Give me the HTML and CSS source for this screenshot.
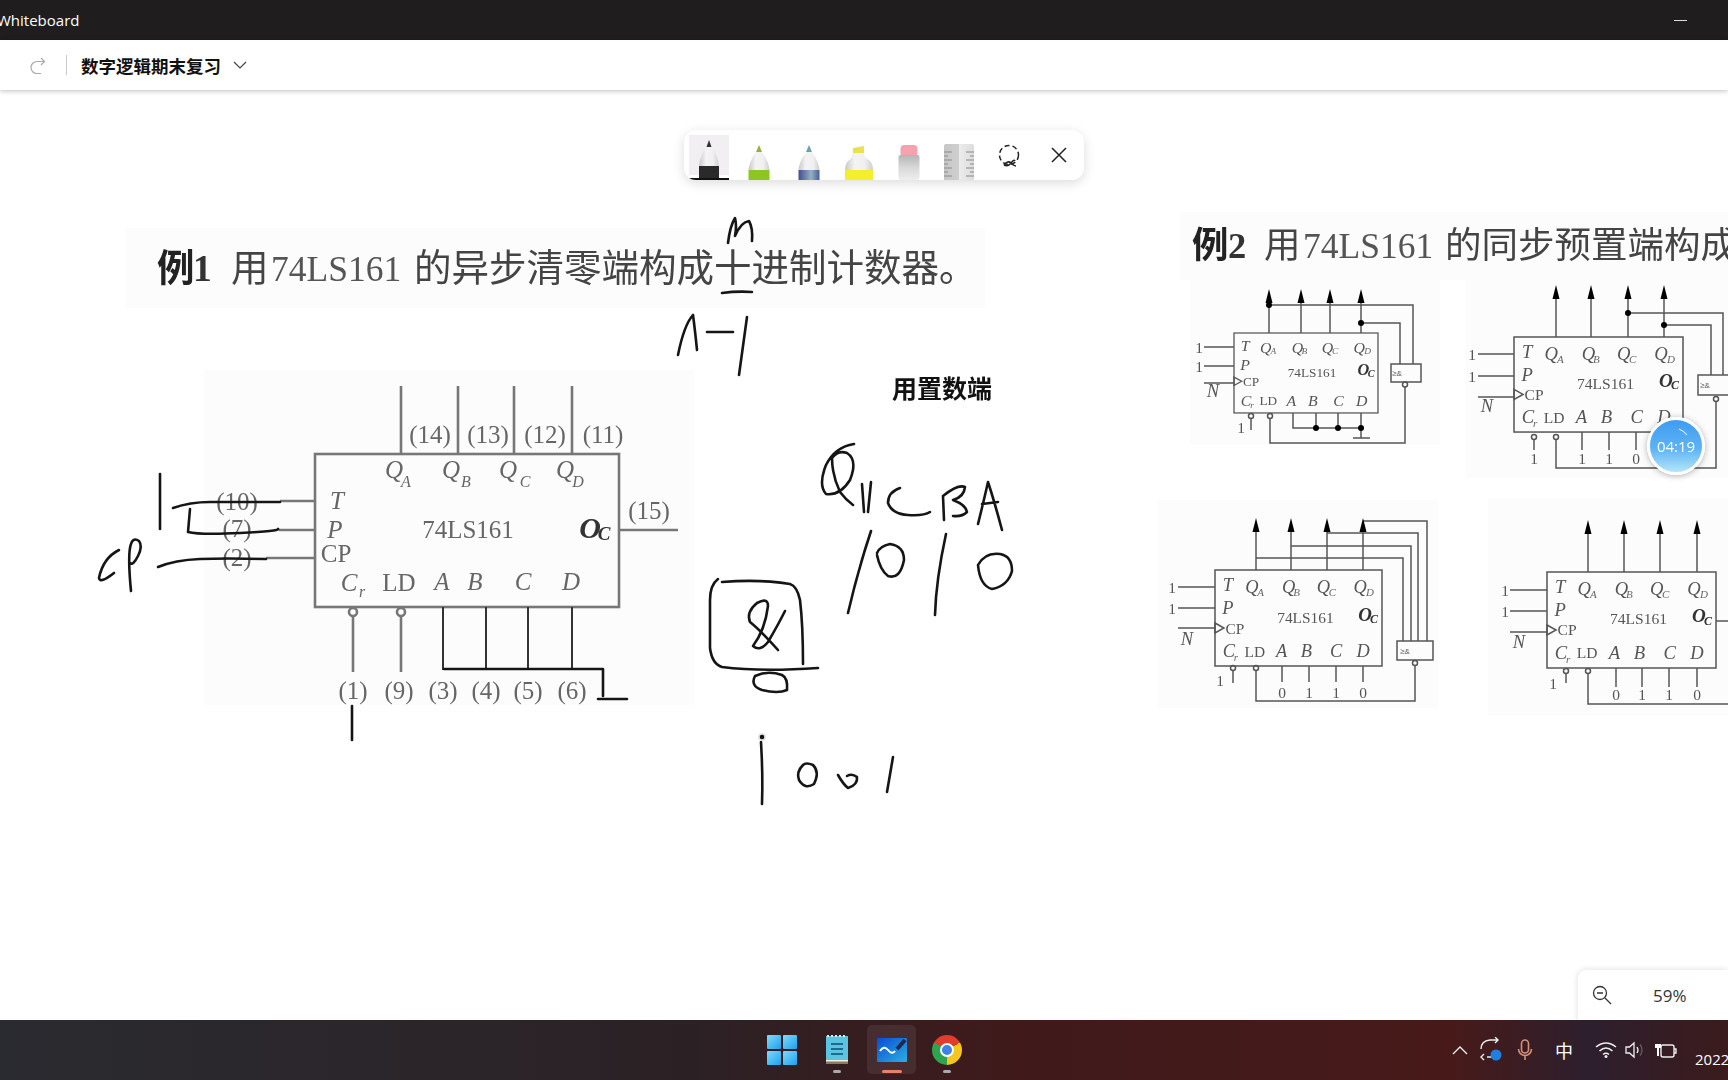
FILE: index.html
```html
<!DOCTYPE html>
<html lang="zh-CN">
<head>
    <meta charset="UTF-8">
    <title>Whiteboard</title>
    <link rel="stylesheet" href="styles.css">
</head>
<body>
    <header class="titlebar">
        <span class="app-name">Whiteboard</span>
        <span class="minimize"></span>
    </header>
    <nav class="toolbar">
        <svg class="redo" width="20" height="20" viewBox="0 0 20 20"><path d="M13 3l3.5 3.5L13 10M16 6.500H9a6 6 0 0 0 0 12h4"/></svg>
        <span class="divider"></span>
        <span class="doc-title">数字逻辑期末复习</span>
        <svg class="chevron" width="14" height="10" viewBox="0 0 14 10"><path d="M1 2l6 6 6-6"/></svg>
    </nav>

    <main class="board">
        <svg class="canvas" width="1728" height="930" viewBox="0 90 1728 930">
            <defs>
                <g id="ic">
                    <rect class="wire" x="0" y="0" width="168" height="96"/>
                    <text class="ic-i" x="13" y="15">T</text>
                    <text class="ic-i" x="37" y="17">Q</text><text class="ic-s" x="46" y="22">A</text>
                    <text class="ic-i" x="74" y="17">Q</text><text class="ic-s" x="82" y="22">B</text>
                    <text class="ic-i" x="109" y="17">Q</text><text class="ic-s" x="118" y="22">C</text>
                    <text class="ic-i" x="146" y="17">Q</text><text class="ic-s" x="156" y="22">D</text>
                    <text class="ic-i" x="13" y="38">P</text>
                    <text class="ic-r" x="91" y="47">74LS161</text>
                    <text class="ic-o" x="151" y="44">O</text><text class="ic-os" x="160" y="49">C</text>
                    <path class="wire" d="M0 53L9 58 0 63Z"/>
                    <text class="ic-r" x="20" y="58">CP</text>
                    <text class="ic-i" x="14" y="81">C</text><text class="ic-s" x="21" y="87">r</text>
                    <text class="ic-r" x="40" y="81">LD</text>
                    <text class="ic-i" x="67" y="81">A</text>
                    <text class="ic-i" x="92" y="81">B</text>
                    <text class="ic-i" x="122" y="81">C</text>
                    <text class="ic-i" x="149" y="81">D</text>
                </g>
                <path id="up" d="M0 0L-3.500 14H3.500Z"/>
                <linearGradient id="pen-shade"><stop offset="0" stop-color="#c9c9c9"/><stop offset=".35" stop-color="#f4f4f4"/><stop offset=".7" stop-color="#f0f0f0"/><stop offset="1" stop-color="#cfcfcf"/></linearGradient>
            </defs>

            <!-- scanned page backgrounds -->
            <rect class="paper" x="125" y="228" width="860" height="80"/>
            <rect class="paper" x="204" y="370" width="490" height="335"/>
            <rect class="paper" x="1180" y="212" width="548" height="68"/>
            <rect class="paper" x="1190" y="280" width="250" height="165"/>
            <rect class="paper" x="1466" y="275" width="262" height="203"/>
            <rect class="paper" x="1157" y="500" width="281" height="208"/>
            <rect class="paper" x="1488" y="498" width="240" height="217"/>

            <g class="scan">
                <text class="head" y="281"><tspan class="head-b" x="157">例</tspan><tspan class="head-nb" x="193">1</tspan><tspan x="231">用</tspan><tspan class="head-n" x="271">74LS161</tspan><tspan x="414">的异步清零端构成十进制计数器。</tspan></text>
                <text class="head head-alt" y="258"><tspan class="head-b" x="1192">例</tspan><tspan class="head-nb" x="1228">2</tspan><tspan x="1264">用</tspan><tspan class="head-n" x="1303">74LS161</tspan><tspan x="1445">的同步预置端构成</tspan></text>

                <!-- main 74LS161 -->
                <rect class="bold-wire" x="315" y="454" width="304" height="153"/>
                <path class="bold-wire" d="M401 386V454M458 386V454M514 386V454M572 386V454M315 501H280M315 530H279M315 558H266M619 530H678M353 616V672M401 616V672"/>
                <path class="thin-ink" d="M443 607V670M486 607V670M528 607V670M572 607V670"/>
                <circle class="bold-wire" cx="353" cy="612" r="4"/>
                <circle class="bold-wire" cx="401" cy="612" r="4"/>
                <text class="m-n" x="430" y="436">(14)</text>
                <text class="m-n" x="488" y="436">(13)</text>
                <text class="m-n" x="545" y="436">(12)</text>
                <text class="m-n" x="603" y="436">(11)</text>
                <text class="m-n" x="649" y="512">(15)</text>
                <text class="m-n" x="237" y="503">(10)</text>
                <text class="m-n" x="237" y="530">(7)</text>
                <text class="m-n" x="237" y="559">(2)</text>
                <text class="m-n" x="353" y="692">(1)</text>
                <text class="m-n" x="399" y="692">(9)</text>
                <text class="m-n" x="443" y="692">(3)</text>
                <text class="m-n" x="486" y="692">(4)</text>
                <text class="m-n" x="528" y="692">(5)</text>
                <text class="m-n" x="572" y="692">(6)</text>
                <text class="m-i" x="394" y="469">Q</text><text class="m-s" x="406" y="481">A</text>
                <text class="m-i" x="451" y="469">Q</text><text class="m-s" x="466" y="481">B</text>
                <text class="m-i" x="508" y="469">Q</text><text class="m-s" x="525" y="481">C</text>
                <text class="m-i" x="565" y="469">Q</text><text class="m-s" x="578" y="481">D</text>
                <text class="m-i" x="337" y="500">T</text>
                <text class="m-i" x="335" y="529">P</text>
                <text class="m-n" x="336" y="555">CP</text>
                <text class="m-n" x="468" y="531">74LS161</text>
                <text class="m-o" x="590" y="527">O</text><text class="m-os" x="604" y="533">C</text>
                <text class="m-i" x="349" y="582">C</text><text class="m-s" x="362" y="591">r</text>
                <text class="m-n" x="399" y="584">LD</text>
                <text class="m-i" x="442" y="581">A</text>
                <text class="m-i" x="475" y="581">B</text>
                <text class="m-i" x="523" y="581">C</text>
                <text class="m-i" x="571" y="581">D</text>

                <!-- 例2 top left -->
                <use href="#ic" transform="translate(1234 333) scale(.857 .833)"/>
                <path class="wire" d="M1269 300V333M1301 300V333M1330 300V333M1361 300V333M1269 305H1413V364M1361 323H1400V364M1204 347H1234M1204 366H1234M1204 383H1234M1405 387V443H1270V419M1251 419V430M1293 413V428H1361M1316 413V428M1338 413V428M1361 413V438M1353 438H1370"/>
                <rect class="wire" x="1391" y="364" width="30" height="18"/>
                <circle class="wire" cx="1405" cy="384.500" r="2.500"/><circle class="wire" cx="1251" cy="416" r="2.500"/><circle class="wire" cx="1270" cy="416" r="2.500"/>
                <circle cx="1269" cy="305" r="3"/><circle cx="1361" cy="323" r="3"/><circle cx="1316" cy="428" r="3"/><circle cx="1338" cy="428" r="3"/><circle cx="1361" cy="428" r="3"/>
                <use href="#up" x="1269" y="289"/><use href="#up" x="1301" y="289"/><use href="#up" x="1330" y="289"/><use href="#up" x="1361" y="289"/>
                <text class="ic-r" x="1199" y="347">1</text><text class="ic-r" x="1199" y="366">1</text><text class="ic-i" x="1213" y="391">N</text><text class="ic-r" x="1241" y="427">1</text>
                <text class="tiny" x="1397" y="373">≥&amp;</text>

                <!-- 例2 top right -->
                <use href="#ic" transform="translate(1514 337) scale(1.006 .99)"/>
                <path class="wire" d="M1556 298V337M1591 298V337M1628 298V337M1664 298V337M1628 313H1723V375M1664 325H1711V375M1478 354H1514M1478 376H1514M1478 397H1514M1716 402V468H1556V440M1534 440V450M1582 432V450M1609 432V450M1636 432V450"/>
                <rect class="wire" x="1698" y="375" width="34" height="20"/>
                <circle class="wire" cx="1716" cy="399" r="2.500"/><circle class="wire" cx="1534" cy="437" r="2.500"/><circle class="wire" cx="1556" cy="437" r="2.500"/>
                <circle cx="1628" cy="313" r="3"/><circle cx="1664" cy="325" r="3"/>
                <use href="#up" x="1556" y="285"/><use href="#up" x="1591" y="285"/><use href="#up" x="1628" y="285"/><use href="#up" x="1664" y="285"/>
                <text class="ic-r" x="1472" y="354">1</text><text class="ic-r" x="1472" y="376">1</text><text class="ic-i" x="1487" y="406">N</text>
                <text class="ic-r" x="1534" y="458">1</text><text class="ic-r" x="1582" y="458">1</text><text class="ic-r" x="1609" y="458">1</text><text class="ic-r" x="1636" y="458">0</text>
                <text class="tiny" x="1705" y="385">≥&amp;</text>

                <!-- 例2 bottom left -->
                <use href="#ic" transform="translate(1215 570) scale(.994 1)"/>
                <path class="wire" d="M1256 530V570M1291 530V570M1327 530V570M1363 530V570M1256 558H1403V641M1291 546H1411V641M1327 533H1418V641M1363 521H1427V641M1178 587H1215M1178 608H1215M1178 628H1215M1415 666V701H1256V671M1233 671V683M1282 666V682M1309 666V682M1336 666V682M1363 666V682"/>
                <rect class="wire" x="1397" y="641" width="36" height="19"/>
                <circle class="wire" cx="1415" cy="663" r="2.500"/><circle class="wire" cx="1233" cy="668" r="2.500"/><circle class="wire" cx="1256" cy="668" r="2.500"/>
                <use href="#up" x="1256" y="518"/><use href="#up" x="1291" y="518"/><use href="#up" x="1327" y="518"/><use href="#up" x="1363" y="518"/>
                <text class="ic-r" x="1172" y="587">1</text><text class="ic-r" x="1172" y="608">1</text><text class="ic-i" x="1187" y="639">N</text><text class="ic-r" x="1220" y="680">1</text>
                <text class="ic-r" x="1282" y="692">0</text><text class="ic-r" x="1309" y="692">1</text><text class="ic-r" x="1336" y="692">1</text><text class="ic-r" x="1363" y="692">0</text>
                <text class="tiny" x="1405" y="651">≥&amp;</text>

                <!-- 例2 bottom right -->
                <use href="#ic" transform="translate(1547 572) scale(1.006 1)"/>
                <path class="wire" d="M1588 532V572M1624 532V572M1660 532V572M1697 532V572M1716 621H1728M1510 590H1547M1510 611H1547M1510 632H1547M1588 674V704H1728M1566 674V683M1616 668V687M1642 668V687M1669 668V687M1697 668V687"/>
                <circle class="wire" cx="1566" cy="671" r="2.500"/><circle class="wire" cx="1588" cy="671" r="2.500"/>
                <use href="#up" x="1588" y="520"/><use href="#up" x="1624" y="520"/><use href="#up" x="1660" y="520"/><use href="#up" x="1697" y="520"/>
                <text class="ic-r" x="1505" y="590">1</text><text class="ic-r" x="1505" y="611">1</text><text class="ic-i" x="1519" y="642">N</text><text class="ic-r" x="1553" y="683">1</text>
                <text class="ic-r" x="1616" y="694">0</text><text class="ic-r" x="1642" y="694">1</text><text class="ic-r" x="1669" y="694">1</text><text class="ic-r" x="1697" y="694">0</text>
            </g>

            <text class="note" x="892" y="387">用置数端</text>

            <!-- handwriting -->
            <g class="ink">
                <path d="M160 474V529"/>
                <path d="M173 508Q190 502 210 502H280"/>
                <path d="M190 509L188 532Q200 535 240 533T278 529"/>
                <path d="M158 567Q175 560 200 559T266 559"/>
                <path d="M119 550Q103 558 99 578Q100 584 114 573"/>
                <path d="M131 591Q128 560 130 548T139 541Q143 546 138 556T130 563"/>
                <path d="M444 669H603V696M598 699H627"/>
                <path d="M352 706V740"/>
                <path d="M728 243Q730 226 735 218Q737 226 735 236Q741 222 749 221Q753 228 752 241"/>
                <path d="M722 293Q737 291 752 292"/>
                <path d="M678 355Q684 325 693 315Q695 330 697 350"/>
                <path d="M707 332H733"/>
                <path d="M747 317L739 375"/>
                <path d="M854 444Q835 447 826 465Q818 485 826 494Q840 496 850 480Q858 460 847 453Q838 450 832 458Q832 475 840 492Q846 500 853 505"/>
                <path d="M862 484L864 512M871 482L868 512"/>
                <path d="M900 488Q888 492 888 503Q892 514 908 515T930 512"/>
                <path d="M943 496L944 520M943 496Q958 484 965 487Q964 497 953 500Q966 505 967 512Q962 517 953 516"/>
                <path d="M978 524Q984 500 988 482Q994 500 1002 530M982 504L998 502"/>
                <path d="M871 531Q858 570 848 613"/>
                <path d="M877 555Q880 570 888 576Q900 580 904 560Q904 546 890 544Q880 546 877 553"/>
                <path d="M946 534Q936 580 935 615"/>
                <path d="M978 565Q980 586 992 589Q1008 586 1012 571Q1012 556 1000 554Q985 552 978 565"/>
                <path d="M718 579Q710 585 710 600V648Q712 664 722 667Q760 672 818 668"/>
                <path d="M722 582Q760 579 790 584Q797 586 800 600Q803 625 803 664"/>
                <path d="M778 650Q760 630 750 622Q746 612 757 603Q768 597 768 606Q765 630 753 646Q760 652 768 642Q778 625 785 611"/>
                <path d="M755 676Q750 686 762 690Q778 694 787 690Q788 678 782 675Q768 670 755 676"/>
                <path d="M761 742Q763 775 762 804"/>
                <path d="M803 765Q796 772 799 780Q805 790 814 784Q820 772 813 765Q806 762 803 765"/>
                <path d="M838 775Q843 784 848 788Q858 785 857 777Q852 773 847 776"/>
                <path d="M893 757L887 792"/>
            </g>
            <circle class="pen-dot" cx="762" cy="737" r="3"/>
        </svg>

        <section class="pens">
            <span class="tool tool-active">
                <svg width="50" height="50" viewBox="0 0 50 50"><path class="pen-body" d="M22 17Q16 26 15 36H35Q34 26 28 17Z"/><path fill="#333" d="M25 10L22.500 17H27.500Z"/><rect fill="#2a2a2a" x="15" y="36" width="20" height="12"/><rect fill="#111" x="5" y="48" width="40" height="2"/></svg>
            </span>
            <span class="tool">
                <svg width="50" height="50" viewBox="0 0 50 50"><path class="pen-body" d="M22 22Q15 32 14.500 40H35.500Q35 32 28 22Z"/><path fill="#94b23a" d="M25 15L22 22H28Z"/><rect fill="#8cc625" x="14.500" y="40" width="21" height="10"/></svg>
            </span>
            <span class="tool">
                <svg width="50" height="50" viewBox="0 0 50 50"><defs><linearGradient id="ink-blue"><stop offset="0" stop-color="#464c8e"/><stop offset=".6" stop-color="#8fb2c4"/><stop offset="1" stop-color="#4b5a9a"/></linearGradient></defs><path class="pen-body" d="M22 22Q15 32 14.500 40H35.500Q35 32 28 22Z"/><path fill="#6ea0ae" d="M25 15L22 22H28Z"/><rect fill="url(#ink-blue)" x="14.500" y="40" width="21" height="10"/></svg>
            </span>
            <span class="tool">
                <svg width="50" height="50" viewBox="0 0 50 50"><path class="pen-body" d="M19 23Q19 28 14 31Q11 34 11 40H39Q39 33 35 30Q30 28 30 23Z"/><path fill="#e9e34a" d="M19 23V18L30 16V23Z"/><rect fill="#f4ee2c" x="11" y="40" width="28" height="10"/></svg>
            </span>
            <span class="tool">
                <svg width="50" height="50" viewBox="0 0 50 50"><defs><linearGradient id="eraser" x1="0" y1="0" x2="0" y2="1"><stop offset="0" stop-color="#b5b5b5"/><stop offset=".5" stop-color="#d8d8d8"/><stop offset="1" stop-color="#eee"/></linearGradient></defs><rect fill="#f2a3ad" x="16.500" y="15" width="17" height="12" rx="4"/><rect fill="url(#eraser)" x="14.500" y="25" width="21" height="25" rx="2"/></svg>
            </span>
            <span class="tool">
                <svg width="50" height="50" viewBox="0 0 50 50"><defs><linearGradient id="ruler"><stop offset="0" stop-color="#c6c6c6"/><stop offset=".5" stop-color="#cfcfcf"/><stop offset=".51" stop-color="#ececec"/><stop offset="1" stop-color="#dcdcdc"/></linearGradient></defs><path fill="url(#ruler)" d="M10 16Q10 14 12 14H38Q40 14 40 16V50H10Z"/><path class="ticks" d="M10 22h8M10 26h4M10 30h8M10 34h4M10 38h8M10 42h4M10 46h8M40 22h-8M40 26h-4M40 30h-8M40 34h-4M40 38h-8M40 42h-4M40 46h-8"/></svg>
            </span>
            <span class="tool">
                <svg width="50" height="50" viewBox="0 0 50 50"><circle class="lasso" cx="25" cy="25" r="9.500"/><path class="lasso-tail" d="M20 35Q24 30 27 33T32 36M20 35Q24 37 27 33T31 31"/></svg>
            </span>
            <span class="tool">
                <svg width="50" height="50" viewBox="0 0 50 50"><path class="close" d="M18 18L32 32M32 18L18 32"/></svg>
            </span>
        </section>

        <div class="timer">
            <svg class="timer-arc" width="46" height="46" viewBox="0 0 46 46"><path d="M26 6Q31 8 34 12"/></svg>
            <span>04:19</span>
        </div>

        <div class="zoom-box">
            <svg class="zoom-icon" width="20" height="20" viewBox="0 0 20 20"><circle cx="8" cy="8" r="6.500"/><path d="M5 8h6M13 13l6 6"/></svg>
            <span class="zoom-val">59%</span>
        </div>
    </main>

    <footer class="taskbar">
        <div></div>
        <div class="task-apps">
            <span class="task-app">
                <span class="win-logo"><i></i><i></i><i></i><i></i></span>
            </span>
            <span class="task-app task-open">
                <svg width="24" height="32" viewBox="0 0 24 32"><rect fill="#5cc4e0" x="1" y="2" width="22" height="25"/><rect fill="#8a7a5e" x="1" y="27" width="22" height="3"/><rect fill="#f2ede2" x="1" y="26" width="22" height="1.500"/><path stroke="#1f6a8f" stroke-width="2" d="M6 10h12M6 15h12M6 20h12"/><path stroke="#d5eef5" stroke-width="2" stroke-dasharray="2 2" d="M2 2h20"/></svg>
            </span>
            <span class="task-app task-active">
                <svg width="30" height="24" viewBox="0 0 30 24"><defs><linearGradient id="wb-blue" x1="0" y1="0" x2="1" y2="1"><stop offset="0" stop-color="#0a4bd6"/><stop offset="1" stop-color="#2bb0e0"/></linearGradient></defs><rect fill="url(#wb-blue)" width="30" height="24" rx="1"/><path fill="none" stroke="#fff" stroke-width="2" d="M3 13Q7 7 11 12T18 13"/><path stroke="#1a2a4a" stroke-width="4" d="M20 11L28 2"/></svg>
            </span>
            <span class="task-app task-open">
                <span class="chrome"></span>
            </span>
        </div>
        <div class="tray">
            <svg class="tray-chevron" width="16" height="10" viewBox="0 0 16 10"><path d="M1 9l7-7 7 7"/></svg>
            <svg class="tray-sync" width="24" height="26" viewBox="0 0 24 26"><path d="M2 12Q2 4 11 3H19M16 0l3 3-3 3M19 20H8M5 17l-3 3 3 3"/><circle cx="17" cy="18" r="5.500"/></svg>
            <svg class="tray-mic" width="16" height="22" viewBox="0 0 16 22"><rect x="4.500" y="1" width="7" height="13" rx="3.500"/><path d="M1.500 10a6.500 6.500 0 0 0 13 0M8 17v4"/></svg>
            <span class="tray-ime">中</span>
            <svg class="tray-wifi" width="22" height="18" viewBox="0 0 22 18"><path d="M1 6Q11-2 21 6M4.500 10Q11 4 17.500 10M8 13.500Q11 11 14 13.500"/><circle cx="11" cy="15.500" r="1.500"/></svg>
            <svg class="tray-sound" width="20" height="18" viewBox="0 0 20 18"><path d="M1 6H4.500L9 2V16L4.500 12H1ZM12 6Q14 9 12 12"/><path class="sound-off" d="M15 3.500Q19 9 15 14.500"/></svg>
            <svg class="tray-battery" width="22" height="20" viewBox="0 0 22 20"><rect x="6" y="5" width="13" height="12" rx="2"/><path d="M19 9h2v4h-2"/><path class="plug" d="M1 0v4M5 0v4M0 4h6v4H4v8H2V8H0Z"/></svg>
            <span class="tray-date">2022/</span>
        </div>
    </footer>
</body>
</html>
```

FILE: styles.css
```css
html, body {
    margin: 0;
    height: 100%;
}
body {
    display: flex;
    flex-direction: column;
    height: 1080px;
    overflow: hidden;
    background: #fff;
    font-family: "Open Sans", "Noto Sans CJK SC", sans-serif;
}

/* window chrome */
.titlebar {
    display: flex;
    flex: none;
    align-items: center;
    justify-content: space-between;
    height: 40px;
    padding: 0 41px 0 0;
    background: #1f1d1e;
    color: #fff;
}
.app-name {
    margin-left: -3px;
    font-size: 15px;
}
.minimize {
    width: 13px;
    height: 1px;
    background: #ddd;
}
.toolbar {
    display: flex;
    flex: none;
    position: relative;
    z-index: 2;
    align-items: center;
    height: 50px;
    padding-left: 28px;
    background: #fff;
    box-shadow: 0 1px 5px rgba(0, 0, 0, .25);
}
.redo path {
    fill: none;
    stroke: #aaa;
    stroke-width: 1.200;
}
.divider {
    width: 1px;
    height: 20px;
    margin: 0 14px 0 18px;
    background: #ccc;
}
.doc-title {
    font-family: "Noto Sans CJK SC", sans-serif;
    font-size: 17.500px;
    font-weight: 700;
    color: #111;
}
.chevron {
    margin-left: 12px;
}
.chevron path {
    fill: none;
    stroke: #444;
    stroke-width: 1.200;
}

/* whiteboard */
.board {
    flex: 1;
    position: relative;
    overflow: hidden;
}
.canvas {
    display: block;
}
.paper {
    fill: #fcfcfc;
}
.scan {
    filter: blur(.4px);
}
.m-n, .m-i, .m-s, .m-o, .m-os, .ic-r, .ic-i, .ic-s, .ic-o, .ic-os, .tiny {
    text-anchor: middle;
    dominant-baseline: central;
}
.head {
    font-family: "Noto Sans CJK SC", sans-serif;
    font-size: 37.500px;
    fill: #444;
}
.head-alt {
    font-size: 36.500px;
}
.head-b {
    font-weight: 700;
    fill: #222;
}
.head-n {
    font-family: "Liberation Serif", serif;
    font-size: 35.500px;
    fill: #555;
}
.head-nb {
    font-family: "Liberation Serif", serif;
    font-weight: 700;
    fill: #333;
}
.bold-wire {
    fill: none;
    stroke: #777;
    stroke-width: 2.600;
}
.thin-ink {
    fill: none;
    stroke: #333;
    stroke-width: 2;
}
.wire {
    fill: none;
    stroke: #555;
    stroke-width: 1.500;
}
.m-n, .m-i, .m-s, .ic-r, .ic-i, .ic-s {
    font-family: "Liberation Serif", serif;
    fill: #666;
}
.m-n {
    font-size: 25px;
    transform: translateY(-2px);
}
.m-i {
    font-size: 25px;
    font-style: italic;
}
.m-s {
    font-size: 16px;
    font-style: italic;
}
.m-o, .m-os, .ic-o, .ic-os {
    font-family: "Liberation Serif", serif;
    font-style: italic;
    font-weight: 700;
    fill: #333;
}
.m-o {
    font-size: 30px;
}
.m-os {
    font-size: 19px;
}
.ic-r {
    font-size: 15.500px;
    fill: #555;
}
.ic-i {
    font-size: 18.500px;
    font-style: italic;
    fill: #555;
}
.ic-s {
    font-size: 11px;
    font-style: italic;
}
.ic-o {
    font-size: 19px;
}
.ic-os {
    font-size: 12px;
}
.tiny {
    font-family: "Liberation Sans", sans-serif;
    font-size: 8px;
    fill: #555;
}
.note {
    font-family: "Noto Sans CJK SC", sans-serif;
    font-size: 25px;
    font-weight: 700;
    dominant-baseline: central;
    fill: #111;
}
.ink path {
    fill: none;
    stroke: #151515;
    stroke-width: 2.600;
    stroke-linecap: round;
    stroke-linejoin: round;
}
.pen-dot {
    fill: #111;
    stroke: #ddd;
    stroke-width: 1.500;
}

/* pen tray */
.pens {
    display: flex;
    position: absolute;
    top: 40px;
    left: 684px;
    height: 50px;
    border-radius: 12px;
    background: #fff;
    box-shadow: 0 3px 12px rgba(0, 0, 0, .14);
    overflow: hidden;
}
.tool {
    display: block;
    width: 50px;
    height: 50px;
}
.tool svg {
    display: block;
}
.tool-active {
    background: linear-gradient(#f1eff1, #f1eff1) 5px 5px / 40px 40px no-repeat;
}
.pen-body {
    fill: url(#pen-shade);
}
.ticks {
    fill: none;
    stroke: #8a8a8a;
}
.lasso {
    fill: none;
    stroke: #222;
    stroke-width: 1.500;
    stroke-dasharray: 5 3;
}
.lasso-tail, .close {
    fill: none;
    stroke: #222;
    stroke-width: 1.500;
}

/* countdown bubble */
.timer {
    display: flex;
    position: absolute;
    top: 327px;
    left: 1647px;
    box-sizing: border-box;
    align-items: center;
    justify-content: center;
    width: 58px;
    height: 58px;
    border: 3px solid #fff;
    border-radius: 50%;
    background: linear-gradient(#3f9cf0, #5db3f4 55%, #b4e6f8);
    box-shadow: 0 1px 6px rgba(0, 0, 0, .3);
    color: #fff;
    font-size: 15px;
}
.timer-arc {
    position: absolute;
    top: 3px;
    left: 3px;
}
.timer-arc path {
    fill: none;
    stroke: #d6ecfc;
    stroke-width: 1.200;
}

/* zoom control */
.zoom-box {
    display: flex;
    position: absolute;
    right: 0;
    bottom: 0;
    align-items: center;
    width: 150px;
    height: 50px;
    border-radius: 8px 0 0 0;
    background: #fff;
    box-shadow: 0 0 6px rgba(0, 0, 0, .14);
}
.zoom-icon {
    margin-left: 14px;
}
.zoom-icon circle, .zoom-icon path {
    fill: none;
    stroke: #333;
    stroke-width: 1.300;
}
.zoom-val {
    margin-left: 41px;
    font-size: 17px;
    color: #333;
}

/* taskbar */
.taskbar {
    display: grid;
    flex: none;
    position: relative;
    z-index: 2;
    grid-template-columns: minmax(0, 1fr) auto minmax(0, 1fr);
    height: 60px;
    background: linear-gradient(90deg, #2a2b30 0, #2b2125 40%, #3f1a1b 58%, #471a19 84%, #2d1f2d 92%, #3b1b1c 100%);
}
.task-apps {
    display: flex;
    align-items: center;
}
.task-app {
    display: flex;
    position: relative;
    align-items: center;
    justify-content: center;
    width: 55px;
    height: 60px;
}
.task-open::after, .task-active::after {
    content: '';
    position: absolute;
    bottom: 7px;
    left: 50%;
    width: 8px;
    height: 3px;
    margin-left: -4px;
    border-radius: 2px;
    background: #aaa;
}
.task-active::before {
    content: '';
    position: absolute;
    top: 5px;
    left: 3px;
    width: 49px;
    height: 49px;
    border-radius: 5px;
    background: rgba(255, 255, 255, .08);
}
.task-active::after {
    width: 20px;
    margin-left: -10px;
    background: #e8806f;
}
.task-active svg {
    position: relative;
}
.win-logo {
    display: grid;
    grid-template-columns: 14px 14px;
    gap: 2px;
}
.win-logo i {
    display: block;
    height: 14px;
    border-radius: 1px;
    background: linear-gradient(135deg, #7fdcf8, #1ea0ef);
}
.chrome {
    display: block;
    position: relative;
    width: 30px;
    height: 30px;
    border-radius: 50%;
    background: conic-gradient(#e33b2e 0 60deg, #f6c51e 60deg 180deg, #2ea44f 180deg 300deg, #e33b2e 300deg);
}
.chrome::after {
    content: '';
    position: absolute;
    top: 8px;
    left: 8px;
    width: 10px;
    height: 10px;
    border: 2px solid #fff;
    border-radius: 50%;
    background: #3c83e6;
}
.tray {
    display: flex;
    align-items: center;
    padding-left: 478px;
    overflow: hidden;
    white-space: nowrap;
    color: #fff;
}
.tray svg {
    flex: none;
}
.tray-chevron path {
    fill: none;
    stroke: #eee;
    stroke-width: 1.400;
}
.tray-sync {
    margin-left: 11px;
}
.tray-sync path {
    fill: none;
    stroke: #eee;
    stroke-width: 1.400;
}
.tray-sync circle {
    fill: #1d7fe0;
}
.tray-mic {
    margin-left: 14px;
}
.tray-mic rect, .tray-mic path {
    fill: none;
    stroke: #d99079;
    stroke-width: 1.600;
}
.tray-ime {
    margin-left: 22px;
    font-family: "Noto Sans CJK SC", sans-serif;
    font-size: 18px;
}
.tray-wifi {
    margin-left: 22px;
}
.tray-wifi path {
    fill: none;
    stroke: #eee;
    stroke-width: 1.500;
}
.tray-wifi circle {
    fill: #eee;
}
.tray-sound {
    margin-left: 8px;
}
.tray-sound path {
    fill: none;
    stroke: #eee;
    stroke-width: 1.300;
}
.tray-sound .sound-off {
    stroke: #6d5a5e;
}
.tray-battery {
    margin-left: 10px;
}
.tray-battery rect, .tray-battery > path:first-of-type {
    fill: none;
    stroke: #eee;
    stroke-width: 1.400;
}
.tray-battery .plug {
    fill: #fff;
    stroke: none;
}
.tray-date {
    margin-left: 18px;
    padding-top: 17px;
    font-size: 15px;
}
```
